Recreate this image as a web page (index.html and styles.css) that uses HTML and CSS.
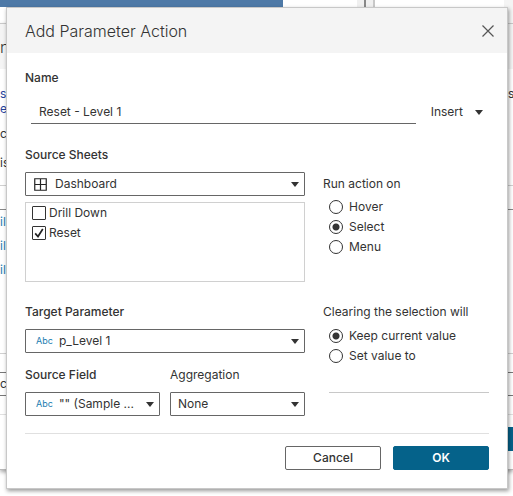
FILE: index.html
```html
<!DOCTYPE html>
<html lang="en">
<head>
<meta charset="utf-8">
<title>Add Parameter Action</title>
<link rel="stylesheet" href="styles.css">
</head>
<body>
<div class="backdrop" aria-hidden="true">
  <div class="sheet"><span class="sheet-bar"></span><span class="splitter"></span><span class="sheet-rest"></span></div>
  <div class="rear">
    <div class="rear-row rear-header"><span class="edge">n</span></div>
    <div class="rear-row rear-copy rear-first"><span class="edge link">s</span><span class="edge-right">s</span></div>
    <div class="rear-row rear-copy"><span class="edge link">e '</span></div>
    <div class="rear-row rear-label"><span class="edge">c</span></div>
    <div class="rear-row rear-tabs"><span class="edge">is</span></div>
    <div class="rear-row rear-columns"></div>
    <div class="rear-list">
      <div class="rear-row"><span class="edge item">il</span></div>
      <div class="rear-row"><span class="edge item">il</span></div>
      <div class="rear-row"><span class="edge item">il</span></div>
    </div>
    <div class="rear-row rear-field"><span class="edge">c</span></div>
    <div class="rear-footer"><span class="rear-button"></span></div>
  </div>
</div>

<form class="dialog" role="dialog" aria-labelledby="title">
  <header class="header">
    <h1 id="title">Add Parameter Action</h1>
    <button type="button" class="close" aria-label="Close">
      <svg width="12" height="12" viewBox="0 0 12 12"><path d="M0.5 0.5L11.5 11.5M11.5 0.5L0.5 11.5" fill="none" stroke="#555" stroke-width="1.2"/></svg>
    </button>
  </header>
  <div class="body">
    <label class="label strong" for="name">Name</label>
    <div class="name-row">
      <input class="name" id="name" type="text" value="Reset - Level 1">
      <button type="button" class="insert">Insert
        <svg width="8" height="5" viewBox="0 0 8 5"><path d="M0 0H8L4 5Z" fill="#333"/></svg>
      </button>
    </div>

    <div class="columns">
      <section>
        <label class="label strong" for="sheets">Source Sheets</label>
        <div class="picker sheets">
          <select id="sheets"><option>Dashboard</option></select>
          <svg class="lead" width="13" height="13" viewBox="0 0 13 13"><path d="M.75.75H12.25V12.25H.75ZM6.5 1V12M1 6.5H12" fill="none" stroke="#222" stroke-width="1.2"/></svg>
          <svg class="arrow" width="8" height="5" viewBox="0 0 8 5"><path d="M0 0H8L4 5Z" fill="#333"/></svg>
        </div>
        <div class="list">
          <label class="choice"><input type="checkbox"><span>Drill Down</span></label>
          <label class="choice"><input type="checkbox" checked><span>Reset</span></label>
        </div>
      </section>
      <fieldset class="run">
        <legend class="label">Run action on</legend>
        <label class="choice"><input type="radio" name="run"><span>Hover</span></label>
        <label class="choice"><input type="radio" name="run" checked><span>Select</span></label>
        <label class="choice"><input type="radio" name="run"><span>Menu</span></label>
      </fieldset>
    </div>

    <div class="columns">
      <section>
        <label class="label strong" for="target">Target Parameter</label>
        <div class="picker typed">
          <select id="target"><option>p_Level 1</option></select>
          <span class="lead type">Abc</span>
          <svg class="arrow" width="8" height="5" viewBox="0 0 8 5"><path d="M0 0H8L4 5Z" fill="#333"/></svg>
        </div>
        <div class="pair">
          <div>
            <label class="label strong" for="field">Source Field</label>
            <div class="picker typed">
              <select id="field"><option>"" (Sample ...</option></select>
              <span class="lead type">Abc</span>
              <svg class="arrow" width="8" height="5" viewBox="0 0 8 5"><path d="M0 0H8L4 5Z" fill="#333"/></svg>
            </div>
          </div>
          <div>
            <label class="label" for="aggregation">Aggregation</label>
            <div class="picker">
              <select id="aggregation"><option>None</option></select>
              <svg class="arrow" width="8" height="5" viewBox="0 0 8 5"><path d="M0 0H8L4 5Z" fill="#333"/></svg>
            </div>
          </div>
        </div>
      </section>
      <fieldset class="clearing">
        <legend class="label">Clearing the selection will</legend>
        <label class="choice"><input type="radio" name="clear" checked><span>Keep current value</span></label>
        <label class="choice"><input type="radio" name="clear" id="set-value"><span>Set value to</span></label>
        <input class="value" type="text" aria-label="Set value to" disabled>
      </fieldset>
    </div>

    <footer class="footer">
      <button type="button" class="button">Cancel</button>
      <button type="submit" class="button primary">OK</button>
    </footer>
  </div>
</form>
</body>
</html>
```

FILE: styles.css
```css
* { box-sizing: border-box; }

body {
  margin: 0;
  background: #fff;
  color: #333;
  font: 12px/16px Inter, "Liberation Sans", sans-serif;
}

input, select, button { font: inherit; color: inherit; }

/* Workbook and parent dialog behind */
.backdrop { position: absolute; inset: 0; overflow: hidden; }
.sheet { display: flex; height: 23px; }
.sheet-bar { width: 283px; height: 7px; background: #4e79a7; }
.splitter {
  width: 18px;
  margin-left: 74px;
  background: linear-gradient(to right, #f0f0f0 7px, #888 7px 9px, #f0f0f0 9px 16px, #c8c8c8 16px);
}
.sheet-rest { width: 9px; margin-left: auto; background: #f4f4f4; }
.rear {
  height: 447px;
  border-top: 1px solid #c8c8c8;
  border-bottom: 1px solid #b8b8b8;
  box-shadow: 0 2px 4px rgba(0, 0, 0, .35);
}
.rear-row { display: flex; align-items: center; justify-content: space-between; height: 24px; }
.edge { flex: none; width: 6px; white-space: pre; }
.edge-right { width: 5px; }
.rear-header { height: 45px; background: #f4f4f4; font-size: 16px; font-weight: 300; }
.rear-copy { height: 15px; }
.rear-first { margin-top: 17px; }
.link { color: #26439c; }
.item { color: #1b7cb0; }
.rear-label { height: 36px; }
.rear-tabs { height: 34px; padding-bottom: 12px; border-bottom: 1px solid #d0d0d0; }
.rear-columns { border-bottom: 1px solid #888; }
.rear-list { height: 144px; border-bottom: 1px solid #d0d0d0; }
.rear-field { margin-top: 18px; border: solid #777; border-width: 1px 0; }
.rear-footer { display: flex; justify-content: flex-end; margin-top: 18px; padding-top: 12px; border-top: 1px solid #e0e0e0; }
.rear-button { width: 10px; height: 24px; background: #05628a; }

/* Dialog */
.dialog {
  position: relative;
  margin: 7px 5px 6px 6px;
  background: #fff;
  border: 1px solid #c8c8c8;
  box-shadow: 1px 2px 4px rgba(0, 0, 0, .4);
}
.header { display: flex; align-items: center; justify-content: space-between; height: 45px; padding: 0 13px 0 18px; background: #f4f4f4; }
h1 { margin: 0; font-size: 16px; line-height: 24px; font-weight: 300; color: #333; }
.close { display: flex; padding: 0; border: 0; background: none; }
.body { padding: 17px 18px 18px; }
.label { display: block; padding: 0; }
.strong { font-weight: 500; }

.name-row { display: flex; align-items: center; margin: 14px 0 23px 6px; }
.name { flex: 1; min-width: 0; height: 24px; padding: 0 8px; border: 0; border-bottom: 1px solid #666; background: none; outline: 0; }
.insert { display: flex; align-items: center; gap: 12px; padding: 0; margin: 0 6px 0 15px; border: 0; background: none; }

.columns { display: grid; grid-template-columns: 280fr 166fr; gap: 18px; margin-bottom: 22px; }
.columns + .columns { margin-bottom: 17px; }
section, fieldset { min-width: 0; }
fieldset { margin: 0; padding: 0; border: 0; }
.pair { display: grid; grid-template-columns: 1fr 1fr; gap: 10px; margin-top: 14px; }

.picker { position: relative; margin-top: 9px; }
.picker select {
  display: block;
  width: 100%;
  height: 24px;
  padding: 0 20px 0 7px;
  appearance: none;
  border: 1px solid #666;
  border-radius: 1px;
  background: #fff;
}
.picker.sheets select { padding-left: 29px; }
.picker.typed select { padding-left: 33px; }
.arrow, .lead { position: absolute; top: 0; bottom: 0; margin: auto 0; pointer-events: none; }
.arrow { right: 6px; }
.lead { left: 9px; }
.type { left: 11px; height: 16px; color: #1b7cb0; font-size: 9px; }
.list { height: 80px; margin-top: 6px; padding: 0 6px; border: 1px solid #d0d0d0; }

.choice { display: flex; align-items: center; height: 20px; }
.choice input { flex: none; width: 14px; height: 14px; margin: 0; appearance: none; border: 1px solid #333; background: #fff; }
.choice input[type="checkbox"] { margin-right: 3px; border-radius: 1px; }
.choice input[type="checkbox"]:checked {
  background: url("data:image/svg+xml,%3Csvg xmlns='http://www.w3.org/2000/svg' viewBox='0 0 12 12'%3E%3Cpath d='M2.2 6.4L5 9.5L9.8 2' fill='none' stroke='%23222' stroke-width='1.7'/%3E%3C/svg%3E") center / 12px 12px;
}
.choice input[type="radio"] { margin: 0 6px; border-radius: 50%; }
.choice input[type="radio"]:checked { background: radial-gradient(circle, #333 3px, #fff 4px); }
.run .label { padding-top: 29px; margin-bottom: 5px; }
.clearing .label { margin-bottom: 6px; }
.value { display: block; width: calc(100% - 6px); height: 27px; margin-left: 6px; padding: 0 8px; border: 0; border-bottom: 1px solid #c8c8c8; background: none; }

.footer { display: flex; justify-content: flex-end; gap: 12px; padding-top: 12px; border-top: 1px solid #e0e0e0; }
.button { width: 96px; height: 24px; padding: 0; border: 1px solid #666; border-radius: 2px; background: #fff; font-weight: 500; }
.primary { border-color: #05628a; background: #05628a; color: #fff; font-weight: 600; }
```
